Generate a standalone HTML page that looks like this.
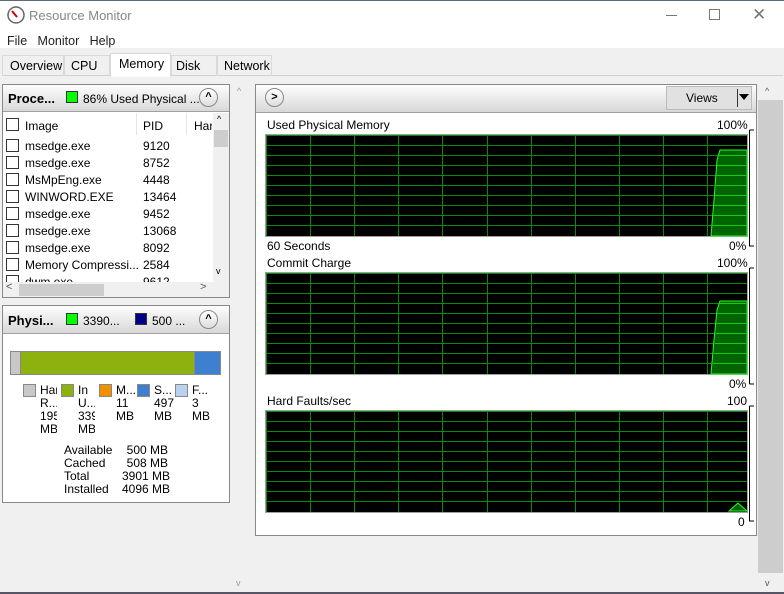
<!DOCTYPE html>
<html><head><meta charset="utf-8"><style>
*{margin:0;padding:0;box-sizing:border-box}
body{width:784px;height:594px;overflow:hidden;background:#f0f0f0;font-family:"Liberation Sans",sans-serif;font-size:12px;color:#000;position:relative}
.a{position:absolute;white-space:nowrap}
.hdr{position:absolute;background:linear-gradient(#fdfdfd,#d8d8d8);border-bottom:1px solid #a0a0a0}
.cb{position:absolute;width:13px;height:13px;border:1px solid #333;background:#fff}
.circ{position:absolute;width:19px;height:19px;border:1px solid #888;border-radius:50%;background:linear-gradient(#fff,#ddd);font-size:11px;text-align:center;line-height:17px;font-weight:bold}
.sw{position:absolute;width:13px;height:13px;border:1px solid #888}
</style></head><body>
<div class="a" style="left:0;top:0;width:784px;height:48px;background:#fff;border-top:1px solid #5a6a7a"></div>
<svg class="a" style="left:7px;top:6px" width="18" height="18"><circle cx="9" cy="9" r="8" fill="#fff" stroke="#666" stroke-width="1.5"/><path d="M5 5 L10 11" stroke="#c00" stroke-width="2"/></svg>
<div class="a" style="left:29px;top:8px;font-size:13px;color:#888">Resource Monitor</div>
<div class="a" style="left:666px;top:15px;width:11px;height:1px;background:#777"></div>
<div class="a" style="left:709px;top:9px;width:11px;height:11px;border:1px solid #777"></div>
<div class="a" style="left:752px;top:5px;font-size:17px;color:#777">✕</div>
<div class="a" style="left:7px;top:34px;font-size:12.5px;color:#222">File&nbsp;&nbsp;&nbsp;Monitor&nbsp;&nbsp;&nbsp;Help</div>
<div class="a" style="left:2px;top:55px;width:781px;height:21px;border-bottom:1px solid #d0d0d0"></div>
<div class="a" style="left:2px;top:55px;width:62px;height:21px;border:1px solid #d9d9d9;border-bottom:none;padding:3px 0 0 7px;font-size:12.5px">Overview</div>
<div class="a" style="left:64px;top:55px;width:46px;height:21px;border:1px solid #d9d9d9;border-bottom:none;padding:3px 0 0 6px;font-size:12.5px">CPU</div>
<div class="a" style="left:110px;top:53px;width:61px;height:24px;background:#fff;border:1px solid #d9d9d9;border-bottom:none;padding:3px 0 0 8px;font-size:12.5px">Memory</div>
<div class="a" style="left:171px;top:55px;width:46px;height:21px;border:1px solid #d9d9d9;border-bottom:none;padding:3px 0 0 4px;font-size:12.5px">Disk</div>
<div class="a" style="left:217px;top:55px;width:55px;height:21px;border:1px solid #d9d9d9;border-bottom:none;padding:3px 0 0 6px;font-size:12.5px">Network</div>
<div class="a" style="left:237px;top:86px;font-size:9px;color:#999">^</div>
<div class="a" style="left:236px;top:578px;font-size:9px;color:#999">v</div>
<div class="a" style="left:2px;top:84px;width:228px;height:214px;background:#fff;border:1px solid #888"></div>
<div class="hdr" style="left:3px;top:85px;width:226px;height:27px"></div>
<div class="a" style="left:8px;top:91px;font-size:13px;font-weight:bold">Proce...</div>
<div class="a" style="left:66px;top:91px;width:12px;height:12px;background:#0f0;border:1px solid #333"></div>
<div class="a" style="left:83px;top:92px">86% Used Physical ...</div>
<div class="circ" style="left:199px;top:88px">^</div>
<div class="a" style="left:3px;top:113px;width:210px;height:22px;background:#fff"></div>
<div class="a" style="left:136px;top:113px;width:1px;height:22px;background:#e5e5e5"></div>
<div class="a" style="left:186px;top:113px;width:1px;height:22px;background:#e5e5e5"></div>
<div class="cb" style="left:6px;top:118px"></div><div class="a" style="left:25px;top:119px">Image</div>
<div class="a" style="left:143px;top:119px">PID</div><div class="a" style="left:194px;top:119px;width:18px;overflow:hidden">Har</div>
<div class="a" style="left:213px;top:113px;width:16px;height:170px;background:#f0f0f0"></div>
<div class="a" style="left:214px;top:130px;width:14px;height:17px;background:#cdcdcd"></div>
<div class="a" style="left:217px;top:114px;font-size:9px">^</div>
<div class="a" style="left:216px;top:266px;font-size:9px">v</div>
<div class="a" style="left:3px;top:282px;width:226px;height:15px;background:#f0f0f0"></div>
<div class="a" style="left:19px;top:284px;width:85px;height:12px;background:#cdcdcd"></div>
<div class="a" style="left:6px;top:281px;font-size:11px;color:#555">&lt;</div>
<div class="a" style="left:200px;top:281px;font-size:11px;color:#555">&gt;</div>
<div class="a" style="left:3px;top:137px;width:210px;height:145px;overflow:hidden">
<div style="position:relative">
<div class="cb" style="left:3px;top:2px"></div><div class="a" style="left:22px;top:2px">msedge.exe</div><div class="a" style="left:140px;top:2px">9120</div>
<div class="cb" style="left:3px;top:19px"></div><div class="a" style="left:22px;top:19px">msedge.exe</div><div class="a" style="left:140px;top:19px">8752</div>
<div class="cb" style="left:3px;top:36px"></div><div class="a" style="left:22px;top:36px">MsMpEng.exe</div><div class="a" style="left:140px;top:36px">4448</div>
<div class="cb" style="left:3px;top:53px"></div><div class="a" style="left:22px;top:53px">WINWORD.EXE</div><div class="a" style="left:140px;top:53px">13464</div>
<div class="cb" style="left:3px;top:70px"></div><div class="a" style="left:22px;top:70px">msedge.exe</div><div class="a" style="left:140px;top:70px">9452</div>
<div class="cb" style="left:3px;top:87px"></div><div class="a" style="left:22px;top:87px">msedge.exe</div><div class="a" style="left:140px;top:87px">13068</div>
<div class="cb" style="left:3px;top:104px"></div><div class="a" style="left:22px;top:104px">msedge.exe</div><div class="a" style="left:140px;top:104px">8092</div>
<div class="cb" style="left:3px;top:121px"></div><div class="a" style="left:22px;top:121px">Memory Compressi...</div><div class="a" style="left:140px;top:121px">2584</div>
<div class="cb" style="left:3px;top:138px"></div><div class="a" style="left:22px;top:138px">dwm.exe</div><div class="a" style="left:140px;top:138px">9612</div>
</div></div>
<div class="a" style="left:2px;top:305px;width:228px;height:198px;background:#fff;border:1px solid #888"></div>
<div class="hdr" style="left:3px;top:306px;width:226px;height:28px"></div>
<div class="a" style="left:8px;top:313px;font-size:13px;font-weight:bold">Physi...</div>
<div class="a" style="left:66px;top:313px;width:12px;height:12px;background:#0f0;border:1px solid #333"></div>
<div class="a" style="left:83px;top:314px">3390...</div>
<div class="a" style="left:135px;top:313px;width:12px;height:12px;background:#008;border:1px solid #333"></div>
<div class="a" style="left:152px;top:314px">500 ...</div>
<div class="circ" style="left:199px;top:310px">^</div>
<div class="a" style="left:10px;top:351px;width:211px;height:24px;border:1px solid #888;background:#8db210"></div>
<div class="a" style="left:11px;top:352px;width:10px;height:22px;background:#c8c8c8;border-right:1px solid #888"></div>
<div class="a" style="left:194px;top:352px;width:26px;height:22px;background:#3e7fcf;border-left:1px solid #888"></div>
<div class="sw" style="left:23px;top:384px;background:#c8c8c8"></div>
<div class="sw" style="left:61px;top:384px;background:#8db210"></div>
<div class="sw" style="left:99px;top:384px;background:#f39000"></div>
<div class="sw" style="left:137px;top:384px;background:#3e7fcf"></div>
<div class="sw" style="left:175px;top:384px;background:#b8d2f0"></div>
<div class="a" style="left:40px;top:384px;line-height:13px;width:17px;overflow:hidden">Har<br>R...<br>195<br>MB</div>
<div class="a" style="left:78px;top:384px;line-height:13px;width:17px;overflow:hidden">In<br>U...<br>339<br>MB</div>
<div class="a" style="left:116px;top:384px;line-height:13px">M...<br>11<br>MB</div>
<div class="a" style="left:154px;top:384px;line-height:13px">S...<br>497<br>MB</div>
<div class="a" style="left:192px;top:384px;line-height:13px">F...<br>3<br>MB</div>
<div class="a" style="left:64px;top:444px;line-height:13px">Available<br>Cached<br>Total<br>Installed</div>
<div class="a" style="left:122px;top:444px;line-height:13px;text-align:right;width:46px">500 MB<br>508 MB<br>3901 MB<br>4096 MB</div>
<div class="a" style="left:255px;top:84px;width:502px;height:452px;background:#fff;border:1px solid #888"></div>
<div class="hdr" style="left:256px;top:85px;width:500px;height:28px"></div>
<div class="circ" style="left:265px;top:88px">&gt;</div>
<div class="a" style="left:666px;top:86px;width:86px;height:24px;background:#e1e1e1;border:1px solid #bbb"></div>
<div class="a" style="left:686px;top:91px">Views</div>
<div class="a" style="left:737px;top:89px;width:1px;height:18px;background:#333"></div>
<div class="a" style="left:739px;top:94px;width:0;height:0;border-left:5px solid transparent;border-right:5px solid transparent;border-top:6px solid #000"></div>
<div class="a" style="left:757px;top:84px;width:27px;height:508px;background:#f0f0f0"></div>
<div class="a" style="left:758px;top:100px;width:25px;height:473px;background:#cdcdcd"></div>
<div class="a" style="left:765px;top:86px;font-size:9px;color:#555">^</div>
<div class="a" style="left:765px;top:578px;font-size:9px;color:#555">v</div>
<div class="a" style="left:0;top:592px;width:784px;height:2px;background:#556"></div>
<div class="a" style="left:267px;top:118px">Used Physical Memory</div>
<div class="a" style="left:717px;top:118px">100%</div>
<div class="a" style="left:267px;top:239px">60 Seconds</div>
<div class="a" style="left:729px;top:239px">0%</div>
<div class="a" style="left:267px;top:256px">Commit Charge</div>
<div class="a" style="left:717px;top:256px">100%</div>
<div class="a" style="left:729px;top:377px">0%</div>
<div class="a" style="left:267px;top:394px">Hard Faults/sec</div>
<div class="a" style="left:727px;top:394px">100</div>
<div class="a" style="left:738px;top:515px">0</div>
<svg class="a" style="left:0;top:0" width="784" height="594">
<defs>
<g id="grid" stroke="#0a8a0a" fill="none" shape-rendering="crispEdges">
<rect x="0" y="0" width="481" height="101" fill="#000" stroke="none"/>
<path d="M0 0.5h481m-481 10h481m-481 10h481m-481 10h481m-481 10h481m-481 10h481m-481 10h481m-481 10h481m-481 10h481m-481 10h481"/>
<path d="M0.5 0v101m44 -101v101m44 -101v101m44 -101v101m44 -101v101m45 -101v101m44 -101v101m44 -101v101m44 -101v101m44 -101v101m44 -101v101"/>
</g>
</defs>
<rect x="265.5" y="134.5" width="482" height="102" fill="#000" stroke="#a0a0a0"/>
<use href="#grid" x="266" y="135"/>
<polygon points="711,236 714,200 717,160 720,150 747,150 747,236" fill="#006400" stroke="#2f2"/>
<path d="M718 155.5H747M717 165.5H747M716 175.5H747M716 185.5H747M715 195.5H747M714 205.5H747M713 215.5H747M712 225.5H747" stroke="#1c1"/>
<rect x="265.5" y="272.5" width="482" height="102" fill="#000" stroke="#a0a0a0"/>
<use href="#grid" x="266" y="273"/>
<polygon points="711,374 714,340 717,310 720,301 747,301 747,374" fill="#006400" stroke="#2f2"/>
<path d="M719 303.5H747M717 313.5H747M716 323.5H747M716 333.5H747M715 343.5H747M714 353.5H747M713 363.5H747" stroke="#1c1"/>
<rect x="265.5" y="410.5" width="482" height="102" fill="#000" stroke="#a0a0a0"/>
<use href="#grid" x="266" y="411"/>
<polygon points="729,511 738,503 747,511" fill="#006400" stroke="#2f2"/>
<path d="M749.5 130V246H754M749.5 130H754M749.5 268V384M749.5 268H754M749.5 384H754M749.5 406V521H754M749.5 406H754" stroke="#000" fill="none"/>
</svg>
</body></html>
